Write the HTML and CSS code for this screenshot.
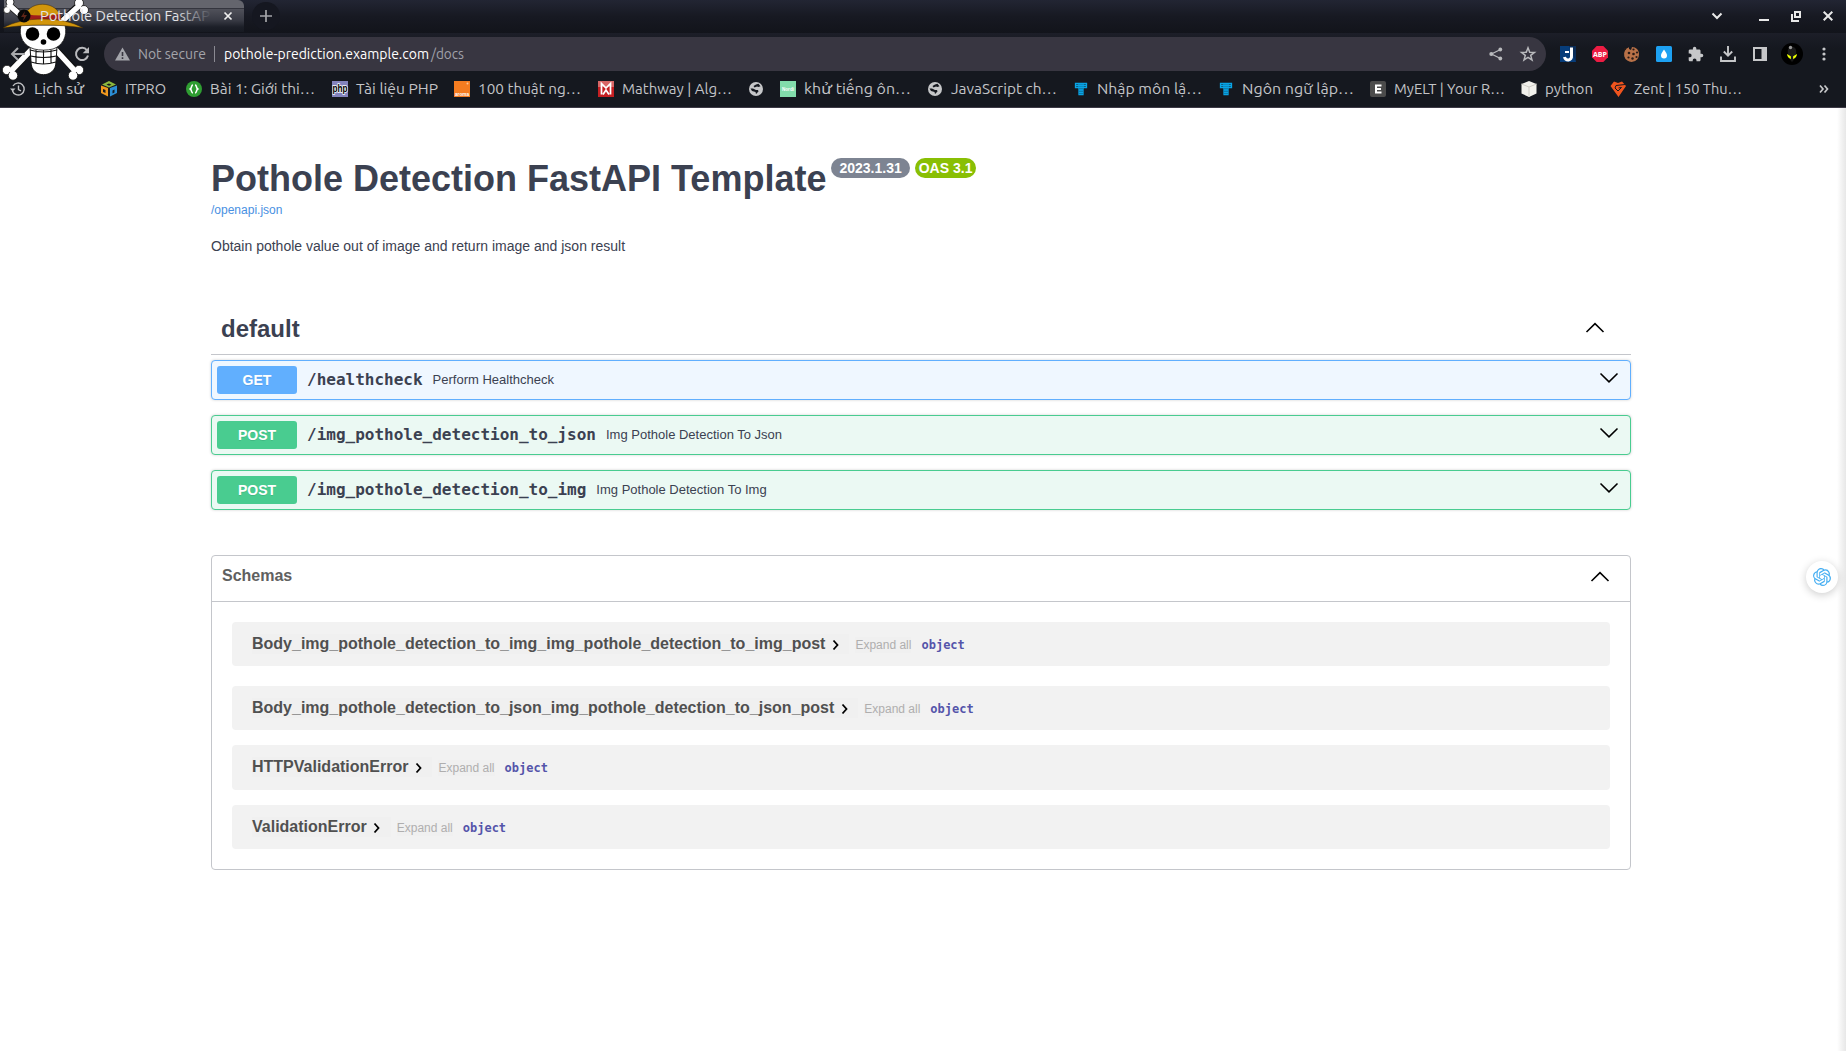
FILE: index.html
```html
<!DOCTYPE html>
<html lang="en">
<head>
<meta charset="utf-8">
<title>Pothole Detection FastAPI Template</title>
<link rel="stylesheet" href="styles.css">
</head>
<body>
<svg class="defs" width="0" height="0">
  <defs>
    <linearGradient id="fade"><stop offset=".8" stop-color="#e4e4e7"/><stop offset="1" stop-color="#e4e4e7" stop-opacity=".05"/></linearGradient>
    <symbol id="down" viewBox="0 0 20 12"><path d="M1.5 1.5 10 9.8 18.5 1.5" fill="none" stroke="#000" stroke-width="1.6"/></symbol>
    <symbol id="up" viewBox="0 0 20 12"><path d="M1.5 10 10 1.7 18.5 10" fill="none" stroke="#000" stroke-width="1.6"/></symbol>
    <symbol id="right" viewBox="0 0 8 12"><path d="M1.5 1.5 5.5 6 1.5 10.5" fill="none" stroke="#000" stroke-width="1.8"/></symbol>
    <symbol id="globe" viewBox="0 0 16 16"><circle cx="8" cy="8" r="7" fill="#c6c7c9"/><path d="M2.500 7.500 5 7.500l3 1.500h2l.5 1.500-2.500 2.500-.5-2L4 10zM8 3.500l2.500-.7 2 2.500-2 .7L9 5.500 6.500 6.500 5.500 5z" fill="#15181f"/></symbol>
    <symbol id="tgrid" viewBox="0 0 16 16"><path d="M2.500 2.500h11v4h-11zM6 2.500v11h4v-11M2.500 4.500h11M8 2.500v11M6 9h4M6 11.300h4" fill="none" stroke="#08a4e6" stroke-width="1.300"/></symbol>
  </defs>
</svg>
<header class="browser">
  <div class="tabs">
    <div class="tab">
      <svg class="favicon" width="14" height="14" viewBox="0 0 14 14"><circle cx="7" cy="7" r="6.500" fill="#080808"/><path d="M8 2 4 8h3l-1 4 4-6H7z" fill="#5e2518"/></svg>
      <svg class="tab-title" width="177" height="24"><text x="0" y="17" textLength="170" lengthAdjust="spacingAndGlyphs" fill="url(#fade)">Pothole Detection FastAP</text></svg>
      <svg width="10" height="10" viewBox="0 0 10 10"><path d="M1.500 1.500 8.500 8.500M8.500 1.500 1.500 8.500" stroke="#eee" stroke-width="1.700"/></svg>
    </div>
    <div class="new-tab"><svg width="14" height="14"><path d="M7 1v12M1 7h12" stroke="#a4a5a9" stroke-width="1.700"/></svg></div>
    <div class="window-buttons">
      <svg width="12" height="16"><path d="M1.500 5.500 6 10 10.500 5.500" fill="none" stroke="#e8e8e8" stroke-width="2"/></svg>
      <svg width="10" height="16"><path d="M0 12h10" stroke="#e8e8e8" stroke-width="2"/></svg>
      <svg width="10" height="16"><path d="M4 4h5v5H4zM1 6v7h7" fill="none" stroke="#e8e8e8" stroke-width="2"/></svg>
      <svg width="10" height="16"><path d="M.7 3.700 9.300 12.300M9.300 3.700.7 12.300" stroke="#e8e8e8" stroke-width="2"/></svg>
    </div>
  </div>
  <div class="toolbar">
    <svg class="back" width="16" height="16"><path d="M15 8H2M8 2 2 8l6 6" fill="none" stroke="#a9aaad" stroke-width="2"/></svg>
    <svg class="reload" width="16" height="16" viewBox="0 0 16 16"><path d="M13 4.300A6.100 6.100 0 1 0 14 9.600" fill="none" stroke="#b9babd" stroke-width="2"/><path d="M15 1v6.300H8.700z" fill="#b9babd"/></svg>
    <div class="address">
      <svg class="warn" width="15" height="14"><path d="M7.500.5 15 13.500H0z" fill="#a4a5ab"/><path d="M7.500 5v4M7.500 10.300v1.700" stroke="#383641" stroke-width="1.600"/></svg>
      <svg class="insecure" width="70" height="22"><text x="0" y="16" textLength="68" lengthAdjust="spacingAndGlyphs">Not secure</text></svg>
      <i class="bar"></i>
      <svg class="url" width="206" height="22"><text x="0" y="16" textLength="205" lengthAdjust="spacingAndGlyphs">pothole-prediction.example.com</text></svg>
      <svg class="path" width="34" height="22"><text x="1" y="16" textLength="33" lengthAdjust="spacingAndGlyphs">/docs</text></svg>
      <svg class="share" width="14" height="14"><path d="M11.500 2.500 2.500 7l9 4.500" fill="none" stroke="#b9babd" stroke-width="1.300"/><circle cx="11.300" cy="2.500" r="1.900" fill="#b9babd"/><circle cx="2.300" cy="7" r="2" fill="#b9babd"/><circle cx="11.300" cy="11.500" r="1.900" fill="#b9babd"/></svg>
      <svg width="16" height="16"><path d="M8 1.800 9.700 6.200l4.800.2-3.800 3 1.300 4.500-4-2.600-4 2.600 1.300-4.500-3.800-3 4.800-.2z" fill="none" stroke="#b9babd" stroke-width="1.500"/></svg>
    </div>
    <div class="extensions">
      <svg width="16" height="16"><path d="M0 0h16v16H0z" fill="#073d7a"/><path d="M9 0h7v16z" fill="#0a2c57"/><path d="M11.500 1.500V10a3.500 3.500 0 0 1-7 1" fill="none" stroke="#fff" stroke-width="3"/><path d="M5 6h4" stroke="#fff" stroke-width="2"/></svg>
      <svg width="16" height="16"><path d="M4.700 0h6.600L16 4.700v6.600L11.300 16H4.700L0 11.300V4.700z" fill="#ec1c43"/><text class="abp" x="1" y="10.700" textLength="14" lengthAdjust="spacingAndGlyphs">ABP</text></svg>
      <svg width="16" height="16"><path d="M5 1.300A7.500 7.500 0 1 0 15 8c0-4-3-7-7-7L7 4 5 3z" fill="#b87148"/><g fill="#291b17"><circle cx="9.500" cy="3.500" r="1.100"/><circle cx="5" cy="7" r="1.300"/><circle cx="9.500" cy="8" r="1.300"/><circle cx="13" cy="6.500" r="1.100"/><circle cx="4.500" cy="11.500" r="1.100"/><circle cx="8.500" cy="12.500" r="1.200"/><circle cx="12.500" cy="11" r="1.100"/><circle cx="1" cy="3" r="1"/></g></svg>
      <svg width="16" height="16"><rect width="16" height="16" rx="1.500" fill="#1da1f2"/><path d="M8 3.500c2 2.800 3 4.300 3 6a3 3 0 0 1-6 0c0-1.700 1-3.200 3-6z" fill="#fff"/></svg>
      <svg width="16" height="16" viewBox="1 0 23 23"><path d="M20.500 11H19V7c0-1.100-.9-2-2-2h-4V3.500a2.500 2.500 0 0 0-5 0V5H4c-1.100 0-2 .9-2 2v3.800h1.500a2.700 2.700 0 0 1 0 5.400H2V20c0 1.100.9 2 2 2h3.800v-1.500a2.700 2.700 0 0 1 5.400 0V22H17c1.100 0 2-.9 2-2v-4h1.500a2.500 2.500 0 0 0 0-5z" fill="#c6c7c9"/></svg>
      <svg width="16" height="16"><path d="M8 0v9M3.800 5.500 8 9.700l4.200-4.200M1 10.500V15h14v-4.500" fill="none" stroke="#c6c7c9" stroke-width="1.900"/></svg>
      <svg width="16" height="16"><path d="M2 2h12v12H2z" fill="none" stroke="#c6c7c9" stroke-width="2"/><path d="M9.500 2H14v12H9.500z" fill="#c6c7c9"/></svg>
      <svg class="avatar" width="22" height="22"><circle cx="11" cy="11" r="11" fill="#000"/><path d="M7 6c2-4 7-3 8 1 .8 4-1 9-4 12-3-3-5-8-4-13z" fill="#1a1a1a"/><circle cx="9.500" cy="4.500" r="1.700" fill="#999"/><path d="M6 11l3.800 2.200.2 2.800c-2.400-.5-3.800-2.500-4-5zM16 11l-3.800 2.200L12 16c2.400-.5 3.800-2.500 4-5z" fill="#eaff00"/></svg>
      <svg width="16" height="16"><g fill="#c6c7c9"><circle cx="8" cy="3" r="1.600"/><circle cx="8" cy="8" r="1.600"/><circle cx="8" cy="13" r="1.600"/></g></svg>
    </div>
  </div>
  <nav class="bookmarks">
    <a><svg width="16" height="16"><path d="M3 5a6 6 0 1 1-.5 5M8.500 4.500v4l2.500 1.300" fill="none" stroke="#c0c1c4" stroke-width="1.400"/><path d="M0 7.500h5.500L2.700 10.500z" fill="#c0c1c4"/></svg><svg width="50" height="24"><text y="17" textLength="50" lengthAdjust="spacingAndGlyphs">Lịch sử</text></svg></a>
    <a><svg width="16" height="16"><path d="M1 3.500 8 0l7 3.500-7 3z" fill="#8cb83d"/><path d="M0 4.500 7 7v8.500L0 12z" fill="#f0981e"/><path d="M9 7l7-2.500V12l-7 3.500z" fill="#2b8fd6"/><path d="M5.500 3.500 8 2.500l2.500 1.200-2.500 1zM2 8l2.500 1v3L2 11zM11.500 9.500 13.500 8.500v3l-2 1z" fill="#15181f"/></svg><svg width="44" height="24"><text y="17" textLength="41" lengthAdjust="spacingAndGlyphs">ITPRO</text></svg></a>
    <a><svg width="16" height="16"><circle cx="8" cy="8" r="8" fill="#2f9e32"/><path d="M7 4C5 4 6 7 4.300 8 6 9 5 12 7 12M9 4c2 0 1 3 2.700 4C10 9 11 12 9 12" fill="none" stroke="#fff" stroke-width="1.600"/></svg><svg width="105" height="24"><text y="17" textLength="105" lengthAdjust="spacingAndGlyphs">Bài 1: Giới thi…</text></svg></a>
    <a><svg width="16" height="16"><path d="M0 0h16v16H0z" fill="#8383bd"/><text class="php" x=".5" y="11" textLength="15" lengthAdjust="spacingAndGlyphs">php</text></svg><svg width="81" height="24"><text y="17" textLength="82" lengthAdjust="spacingAndGlyphs">Tài liệu PHP</text></svg></a>
    <a><svg width="16" height="16"><path d="M0 0h16v16H0z" fill="#f57c20"/><circle cx="13.500" cy="2.500" r="1" fill="#fbc79e"/><text class="mini" x="1" y="14.500" textLength="14" lengthAdjust="spacingAndGlyphs">aroma</text></svg><svg width="103" height="24"><text y="17" textLength="103" lengthAdjust="spacingAndGlyphs">100 thuật ng…</text></svg></a>
    <a><svg width="16" height="16"><path d="M0 0h16v16H0z" fill="#c51f22"/><path d="M0 0h16v6H0z" fill="#d86666"/><path d="M3.500 13.500v-11L8 7l4.500-4.500v11M5 13.500 8 9l3 4.500" fill="none" stroke="#fff" stroke-width="1.700"/></svg><svg width="109" height="24"><text y="17" textLength="110" lengthAdjust="spacingAndGlyphs">Mathway | Alg…</text></svg></a>
    <a class="bare"><svg width="16" height="16"><use href="#globe"/></svg></a>
    <a><svg width="16" height="16"><path d="M0 0h16v16H0z" fill="#82dcab"/><text class="mini" x="2" y="9.500" textLength="12" lengthAdjust="spacingAndGlyphs">Nordi</text></svg><svg width="106" height="24"><text y="17" textLength="107" lengthAdjust="spacingAndGlyphs">khử tiếng ôn…</text></svg></a>
    <a><svg width="16" height="16"><use href="#globe"/></svg><svg width="105" height="24"><text y="17" textLength="106" lengthAdjust="spacingAndGlyphs">JavaScript ch…</text></svg></a>
    <a><svg width="16" height="16"><use href="#tgrid"/></svg><svg width="104" height="24"><text y="17" textLength="105" lengthAdjust="spacingAndGlyphs">Nhập môn lậ…</text></svg></a>
    <a><svg width="16" height="16"><use href="#tgrid"/></svg><svg width="111" height="24"><text y="17" textLength="112" lengthAdjust="spacingAndGlyphs">Ngôn ngữ lập…</text></svg></a>
    <a><svg width="16" height="16"><rect width="16" height="16" rx="2" fill="#4b4b4b"/><path d="M11.500 4.500H6v7h5.500M6 8h5" fill="none" stroke="#fff" stroke-width="2"/></svg><svg width="110" height="24"><text y="17" textLength="111" lengthAdjust="spacingAndGlyphs">MyELT | Your R…</text></svg></a>
    <a><svg width="16" height="16"><path d="M8 0 15.500 3v9.500L8 16 .5 12.500V3z" fill="#f2f1ec"/><path d="M.5 3 8 6l7.500-3M8 6v10" fill="none" stroke="#cfcdc6"/></svg><svg width="48" height="24"><text y="17" textLength="48" lengthAdjust="spacingAndGlyphs">python</text></svg></a>
    <a><svg width="16" height="16"><path d="M4 .5 8 2l4-1.500L16 5 8.500 16 .5 5z" fill="#f0541e"/><path d="M15 3.500 6 4.500 5 7l3 3 3.500-3.500-3 .5" fill="none" stroke="#15181f"/></svg><svg width="108" height="24"><text y="17" textLength="108" lengthAdjust="spacingAndGlyphs">Zent | 150 Thu…</text></svg></a>
    <span class="more"><svg width="10" height="10"><path d="M1 1.500 4 5 1 8.500M5.500 1.500l3 3.500-3 3.500" fill="none" stroke="#c6c7c9" stroke-width="1.700"/></svg></span>
  </nav>
  <svg class="skull" width="92" height="84" viewBox="0 0 92 84">
    <path d="M8 4 26 20M78 6 60 23M11 71 33 48M76 71 54 48" stroke="#111" stroke-width="7"/>
    <g fill="#fff" stroke="#111" stroke-width=".8"><circle cx="7" cy="10" r="3.500"/><circle cx="10" cy="2" r="4"/><circle cx="79" cy="3" r="4.500"/><circle cx="84" cy="10" r="4.500"/><circle cx="7" cy="70" r="4.700"/><circle cx="13" cy="75.500" r="4.700"/><circle cx="79" cy="70" r="4.700"/><circle cx="73" cy="75.500" r="4.700"/></g>
    <path d="M8 4 26 20M80 5 60 23M10 72 33 48M76 72 54 48" stroke="#fff" stroke-width="5.500"/>
    <path d="M30 47h27l-1 15c0 17-25 17-25 0z" fill="#fff" stroke="#111"/>
    <path d="M21 25h44c3 12-3 21-12 24-6 1.500-13 1.500-19 0C24 46 18 37 21 25z" fill="#fff" stroke="#111" stroke-width=".8"/>
    <path d="M30 50q13 4 27 0M30.500 56q13 3 26 0M31 62q12 4 25 0M36 50v13.500M43.500 50v14M51 50v13.500" fill="none" stroke="#111" stroke-width="1.100"/>
    <circle cx="32.500" cy="34" r="6.800" fill="#000"/><circle cx="53.500" cy="34" r="6.800" fill="#000"/><circle cx="43.500" cy="42" r="2.800" fill="#000"/>
    <path d="M24 20C25-1 60-1 61 20z" fill="#d2960c" stroke="#3c2706" stroke-width=".5"/>
    <path d="M24.500 14q18 3 36 0v8q-18-3-36 0z" fill="#a01c1a"/>
    <path d="M3 28C23 16 63 16 83 28 61 24 25 24 3 28z" fill="#d2960c" stroke="#3c2706" stroke-width=".5"/>
  </svg>
</header>
<main class="page">
  <section class="info">
    <h1>Pothole Detection FastAPI Template<span class="badges"><b class="version">2023.1.31</b><b class="oas">OAS 3.1</b></span></h1>
    <a class="spec">/openapi.json</a>
    <p>Obtain pothole value out of image and return image and json result</p>
  </section>
  <section class="operations">
    <h2>default<svg width="20" height="12"><use href="#up"/></svg></h2>
    <div class="op get"><b class="method">GET</b><code>/healthcheck</code><span>Perform Healthcheck</span><svg width="20" height="12"><use href="#down"/></svg></div>
    <div class="op post"><b class="method">POST</b><code>/img_pothole_detection_to_json</code><span>Img Pothole Detection To Json</span><svg width="20" height="12"><use href="#down"/></svg></div>
    <div class="op post"><b class="method">POST</b><code>/img_pothole_detection_to_img</code><span>Img Pothole Detection To Img</span><svg width="20" height="12"><use href="#down"/></svg></div>
  </section>
  <section class="schemas">
    <h3>Schemas<svg width="20" height="12"><use href="#up"/></svg></h3>
    <div class="models">
      <div class="model"><button class="name">Body_img_pothole_detection_to_img_img_pothole_detection_to_img_post<svg width="8" height="12"><use href="#right"/></svg></button><button class="expand">Expand all</button><strong>object</strong></div>
      <div class="model"><button class="name">Body_img_pothole_detection_to_json_img_pothole_detection_to_json_post<svg width="8" height="12"><use href="#right"/></svg></button><button class="expand">Expand all</button><strong>object</strong></div>
      <div class="model tall"><button class="name">HTTPValidationError<svg width="8" height="12"><use href="#right"/></svg></button><button class="expand">Expand all</button><strong>object</strong></div>
      <div class="model"><button class="name">ValidationError<svg width="8" height="12"><use href="#right"/></svg></button><button class="expand">Expand all</button><strong>object</strong></div>
    </div>
  </section>
  <div class="edge"></div>
  <div class="assistant"><svg width="18" height="18" viewBox="0 0 24 24"><path fill="#45aef2" d="M22.2819 9.8211a5.9847 5.9847 0 0 0-.5157-4.9108 6.0462 6.0462 0 0 0-6.5098-2.9A6.0651 6.0651 0 0 0 4.9807 4.1818a5.9847 5.9847 0 0 0-3.9977 2.9 6.0462 6.0462 0 0 0 .7427 7.0966 5.98 5.98 0 0 0 .511 4.9107 6.051 6.051 0 0 0 6.5146 2.9001A5.9847 5.9847 0 0 0 13.2599 24a6.0557 6.0557 0 0 0 5.7718-4.2058 5.9894 5.9894 0 0 0 3.9977-2.9001 6.0557 6.0557 0 0 0-.7475-7.0729zm-9.022 12.6081a4.4755 4.4755 0 0 1-2.8764-1.0408l.1419-.0804 4.7783-2.7582a.7948.7948 0 0 0 .3927-.6813v-6.7369l2.02 1.1686a.071.071 0 0 1 .038.052v5.5826a4.504 4.504 0 0 1-4.4945 4.4944zm-9.6607-4.1254a4.4708 4.4708 0 0 1-.5346-3.0137l.142.0852 4.783 2.7582a.7712.7712 0 0 0 .7806 0l5.8428-3.3685v2.3324a.0804.0804 0 0 1-.0332.0615L9.74 19.9502a4.4992 4.4992 0 0 1-6.1408-1.6464zM2.3408 7.8956a4.485 4.485 0 0 1 2.3655-1.9728V11.6a.7664.7664 0 0 0 .3879.6765l5.8144 3.3543-2.0201 1.1685a.0757.0757 0 0 1-.071 0l-4.8303-2.7865A4.504 4.504 0 0 1 2.3408 7.872zm16.5963 3.8558L13.1038 8.364 15.1192 7.2a.0757.0757 0 0 1 .071 0l4.8303 2.7913a4.4944 4.4944 0 0 1-.6765 8.1042v-5.6772a.79.79 0 0 0-.407-.667zm2.0107-3.0231l-.142-.0852-4.7735-2.7818a.7759.7759 0 0 0-.7854 0L9.409 9.2297V6.8974a.0662.0662 0 0 1 .0284-.0615l4.8303-2.7866a4.4992 4.4992 0 0 1 6.6802 4.66zM8.3065 12.863l-2.02-1.1638a.0804.0804 0 0 1-.038-.0567V6.0742a4.4992 4.4992 0 0 1 7.3757-3.4537l-.142.0805L8.704 5.459a.7948.7948 0 0 0-.3927.6813zm1.0976-2.3654l2.602-1.4998 2.6069 1.4998v2.9994l-2.5974 1.4997-2.6067-1.4997Z"/></svg></div>
</main>
</body>
</html>
```
FILE: styles.css
```css
* { box-sizing: border-box; }
body { margin: 0; width: 1846px; height: 1051px; overflow: hidden; background: #fff; color: #3b4151; font-family: "Liberation Sans", Arial, sans-serif; }
svg { display: block; flex: none; overflow: visible; }
.defs { position: absolute; }

.browser { position: relative; height: 108px; background: #15181f; border-bottom: 1px solid #3d3a46; font-family: Ubuntu, "Noto Sans", sans-serif; }
.browser text { font-size: 15px; }
.tabs { display: flex; height: 33px; background: linear-gradient(#222533, #171922 50%, #12141b); }
.tab { display: flex; align-items: center; width: 240px; height: 32px; margin-left: 4px; padding: 0 12px 0 13px; border-radius: 0 6px 0 0; background: linear-gradient(#64656d 0 8px, #34353e 8px 9px, #50515a 9px, #393b45 20px, #1c1f28 27px, #171a22); }
.tab-title { margin: 0 6px 0 9px; }
.new-tab { display: flex; align-items: center; justify-content: center; width: 28px; height: 28px; margin: 2px 0 0 8px; border-radius: 50%; background: #151720; }
.window-buttons { display: flex; gap: 22px; margin: 8px 13px 0 auto; }
.window-buttons svg:first-child { margin-right: 14px; }

.toolbar { display: flex; align-items: center; height: 39px; padding-top: 3px; background: linear-gradient(#1c1e28, #15181f 40%); }
.back { margin-left: 10px; }
.reload { margin: 0 15px 0 48px; }
.address { display: flex; align-items: center; width: 1442px; height: 34px; padding: 0 10px 0 11px; border-radius: 17px; background: #383641; margin-left: -1px; }
.insecure { margin-left: 8px; fill: #a4a5ab; }
.bar { width: 1px; height: 16px; margin: 0 9px 0 6px; background: #8b8a92; }
.url { fill: #fff; }
.path { fill: #a0a1aa; }
.share { margin: 0 17px 0 auto; }
.extensions { display: flex; align-items: center; gap: 16px; margin-left: 14px; }
.extensions .avatar { margin: 0 -3px; }
.extensions .abp { font: bold 7px "Open Sans", sans-serif; fill: #fff; }

.bookmarks { display: flex; align-items: center; height: 33px; padding-left: 10px; }
.bookmarks a { display: flex; align-items: center; gap: 8px; margin-right: 17px; fill: #c3c4c7; }
.bookmarks a.bare { margin-right: 16px; }
.bookmarks .php { font: bold 10px "Liberation Sans", sans-serif; fill: #000; stroke: #fff; stroke-width: 1.5px; paint-order: stroke; }
.bookmarks .mini { font: bold 5px "Liberation Sans", sans-serif; fill: #fff; }
.more { margin: 0 17px 0 auto; }
/* The mascot sits above the bars' backgrounds and below their controls. */
.skull { position: absolute; left: 0; top: 0; z-index: 1; overflow: hidden; }
.favicon, .tab-title, .back, .reload { position: relative; z-index: 2; }

.page { position: relative; height: 943px; padding: 50px 215px 0 211px; }
.info { height: 145px; }
h1 { display: flex; align-items: flex-start; margin: 0; font-size: 36px; line-height: 42px; white-space: nowrap; }
.badges { display: flex; gap: 5px; margin: 0 0 0 5px; }
.badges b { height: 20px; padding: 0 8px; border-radius: 10px; background: #7d8492; color: #fff; font-size: 14px; line-height: 20px; }
.badges .oas { padding: 0 4px; background: #89bf04; }
.spec { display: block; margin-top: 3px; color: #4990e2; font-size: 12px; line-height: 14px; }
.info p { margin: 20px 0 0; font-size: 14px; line-height: 18px; }

h2 { display: flex; align-items: center; justify-content: space-between; height: 52px; margin: 0 0 5px; padding: 0 26px 0 10px; border-bottom: 1px solid #c4c6cb; font-size: 24px; }
h2 svg { margin-top: -2px; }
.op { display: flex; align-items: center; height: 40px; margin-bottom: 15px; padding: 0 11px 0 5px; border: 1px solid; border-radius: 4px; box-shadow: 0 0 3px rgba(0, 0, 0, .19); }
.get { border-color: #61affe; background: #eff7ff; }
.post { border-color: #49cc90; background: #ebf9f3; }
.method { width: 80px; height: 28px; border-radius: 3px; color: #fff; font-size: 14px; line-height: 28px; text-align: center; text-shadow: 0 1px 0 rgba(0, 0, 0, .1); }
.get .method { background: #61affe; }
.post .method { background: #49cc90; }
.op code { margin: 0 10px; padding-bottom: 2px; font: bold 16px/19px "DejaVu Sans Mono", monospace; }
.op span { padding-bottom: 2px; font-size: 13px; }
.op svg { margin: -4px 0 0 auto; }

.schemas { height: 315px; margin-top: 45px; border: 1px solid #c4c6cb; border-radius: 4px; }
h3 { display: flex; justify-content: space-between; height: 46px; margin: 0; padding: 10px 20px 0 10px; border-bottom: 1px solid #c4c6cb; color: #606060; font-size: 16px; line-height: 20px; }
h3 svg { margin-top: 5px; }
.models { padding: 20px; }
.model { display: flex; height: 44px; margin-bottom: 15px; padding: 12px 20px; border-radius: 4px; background: #f2f2f2; }
.model:first-child { margin-bottom: 20px; }
.model.tall { height: 45px; }
.model button { border: 0; padding: 0; background: #f0f0f0; font-family: inherit; }
.model .name { display: flex; height: 20px; padding-right: 9.5px; color: #505050; font-size: 16px; font-weight: bold; line-height: 19px; }
.name svg { margin: 5px 0 0 6.5px; }
.model .expand { height: 16px; margin: 3px 0 0 6px; color: #afaeae; font-size: 12px; line-height: 14px; }
.model strong { margin-left: 10px; color: #5555aa; font: bold 12px/22px "DejaVu Sans Mono", monospace; }

.edge { position: absolute; top: 0; right: 0; width: 9px; height: 100%; background: linear-gradient(90deg, #fff, #e7e7e7); }
.assistant { position: absolute; top: 453px; right: 8px; display: flex; align-items: center; justify-content: center; width: 32px; height: 32px; border-radius: 50%; background: #fff; box-shadow: 0 2px 8px rgba(0, 0, 0, .2); }
```
